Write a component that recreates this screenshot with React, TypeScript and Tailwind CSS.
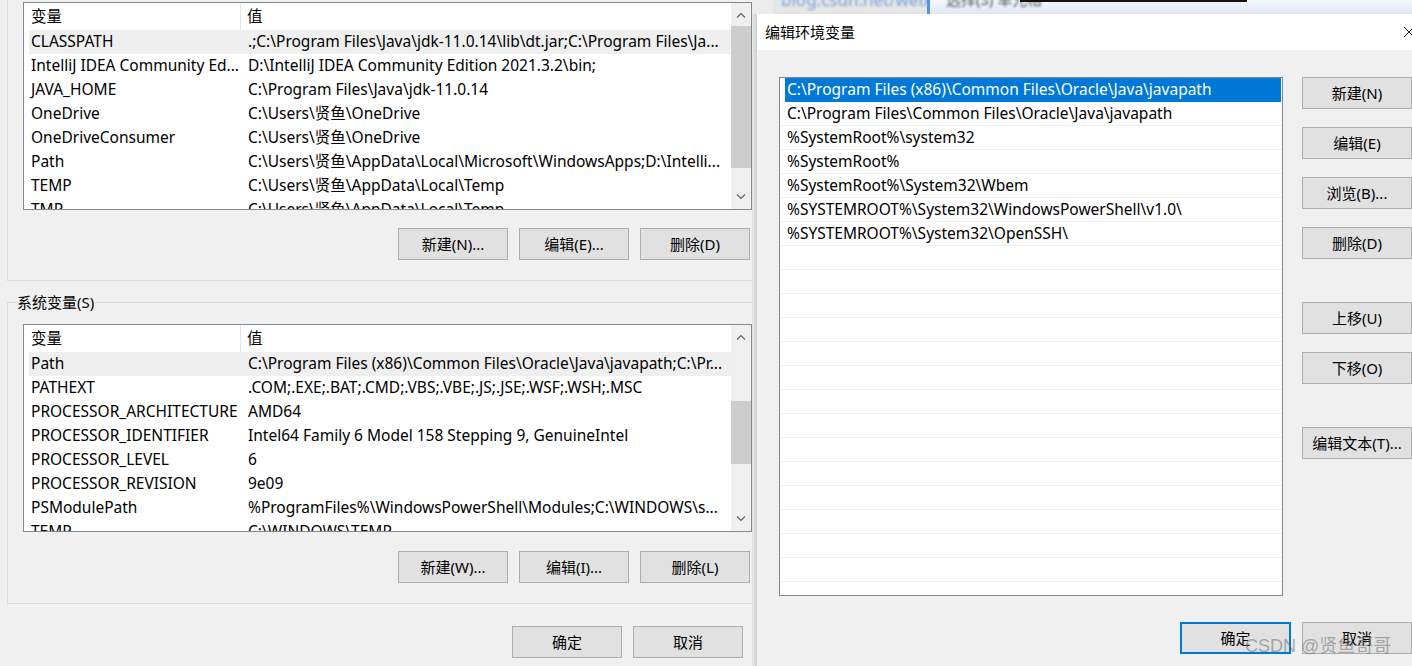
import React from 'react'

const font = { fontFamily: '"Noto Sans", "Noto Sans CJK SC", sans-serif' }

interface Row {
  name: string
  value: string
}

const userVars: Row[] = [
  { name: 'CLASSPATH', value: '.;C:\\Program Files\\Java\\jdk-11.0.14\\lib\\dt.jar;C:\\Program Files\\Ja...' },
  { name: 'IntelliJ IDEA Community Ed...', value: 'D:\\IntelliJ IDEA Community Edition 2021.3.2\\bin;' },
  { name: 'JAVA_HOME', value: 'C:\\Program Files\\Java\\jdk-11.0.14' },
  { name: 'OneDrive', value: 'C:\\Users\\贤鱼\\OneDrive' },
  { name: 'OneDriveConsumer', value: 'C:\\Users\\贤鱼\\OneDrive' },
  { name: 'Path', value: 'C:\\Users\\贤鱼\\AppData\\Local\\Microsoft\\WindowsApps;D:\\Intelli...' },
  { name: 'TEMP', value: 'C:\\Users\\贤鱼\\AppData\\Local\\Temp' },
  { name: 'TMP', value: 'C:\\Users\\贤鱼\\AppData\\Local\\Temp' }
]

const systemVars: Row[] = [
  { name: 'Path', value: 'C:\\Program Files (x86)\\Common Files\\Oracle\\Java\\javapath;C:\\Pr...' },
  { name: 'PATHEXT', value: '.COM;.EXE;.BAT;.CMD;.VBS;.VBE;.JS;.JSE;.WSF;.WSH;.MSC' },
  { name: 'PROCESSOR_ARCHITECTURE', value: 'AMD64' },
  { name: 'PROCESSOR_IDENTIFIER', value: 'Intel64 Family 6 Model 158 Stepping 9, GenuineIntel' },
  { name: 'PROCESSOR_LEVEL', value: '6' },
  { name: 'PROCESSOR_REVISION', value: '9e09' },
  { name: 'PSModulePath', value: '%ProgramFiles%\\WindowsPowerShell\\Modules;C:\\WINDOWS\\s...' },
  { name: 'TEMP', value: 'C:\\WINDOWS\\TEMP' }
]

const pathEntries = [
  'C:\\Program Files (x86)\\Common Files\\Oracle\\Java\\javapath',
  'C:\\Program Files\\Common Files\\Oracle\\Java\\javapath',
  '%SystemRoot%\\system32',
  '%SystemRoot%',
  '%SystemRoot%\\System32\\Wbem',
  '%SYSTEMROOT%\\System32\\WindowsPowerShell\\v1.0\\',
  '%SYSTEMROOT%\\System32\\OpenSSH\\'
]

function Chevron({ up }: { up?: boolean }) {
  return (
    <svg width="10" height="6" viewBox="0 0 10 6" fill="none">
      <path d={up ? 'M1 5.5 L5 1.5 L9 5.5' : 'M1 0.5 L5 4.5 L9 0.5'} stroke="#606060" strokeWidth="1.2" />
    </svg>
  )
}

function Scrollbar({ thumbTop, thumbHeight }: { thumbTop: number; thumbHeight: number }) {
  return (
    <div className="relative w-[20px] h-full bg-[#f0f0f0] flex flex-col items-center justify-between py-[9px]">
      <Chevron up />
      <div className="absolute left-0 w-[20px] bg-[#cdcdcd]" style={{ top: thumbTop, height: thumbHeight }} />
      <Chevron />
    </div>
  )
}

function VarTable({ rows, thumbTop, thumbHeight }: { rows: Row[]; thumbTop: number; thumbHeight: number }) {
  return (
    <div className="w-[729px] h-[208px] border border-[#828790] bg-white flex">
      <div className="flex-1 pl-[5px] overflow-hidden">
        <div className="h-[27px] flex items-center text-[15.5px]">
          <div className="w-[212px] pl-[2px] h-full flex items-center border-r border-[#e5e5e5]">变量</div>
          <div className="pl-[6px]">值</div>
        </div>
        {rows.map((r, i) => (
          <div
            key={r.name + i}
            className={'h-[24px] flex items-center text-[15.5px] whitespace-nowrap ' + (i === 0 ? 'bg-[#efefef]' : '')}
          >
            <div className="w-[212px] pl-[2px] overflow-hidden">{r.name}</div>
            <div className="pl-[7px]">{r.value}</div>
          </div>
        ))}
      </div>
      <Scrollbar thumbTop={thumbTop} thumbHeight={thumbHeight} />
    </div>
  )
}

function Btn({ label, w = 'w-[110px]', primary }: { label: string; w?: string; primary?: boolean }) {
  return (
    <div
      className={
        w +
        ' h-[32px] shrink-0 bg-[#e1e1e1] flex items-center justify-center text-[15px] text-black ' +
        (primary ? 'border-2 border-[#0078d7]' : 'border border-[#adadad]')
      }
    >
      {label}
    </div>
  )
}

function LeftWindow() {
  return (
    <div className="w-[752px] shrink-0 h-[666px] bg-[#f0f0f0] flex flex-col">
      {/* user variables group */}
      <div className="ml-[7px] border-l border-b border-[#dcdcdc] pl-[15px] pt-[2px] pb-[20px]">
        <VarTable rows={userVars} thumbTop={23} thumbHeight={142} />
        <div className="flex justify-end gap-[11px] mt-[18px] pr-[2px]">
          <Btn label="新建(N)..." />
          <Btn label="编辑(E)..." />
          <Btn label="删除(D)" />
        </div>
      </div>
      {/* system variables group */}
      <div className="relative ml-[7px] mt-[21px] border-l border-t border-b border-[#dcdcdc] pl-[15px] pt-[21px] pb-[20px]">
        <div className="absolute left-[8px] -top-[11px] bg-[#f0f0f0] px-[1px] text-[15px] leading-[20px]">系统变量(S)</div>
        <VarTable rows={systemVars} thumbTop={76} thumbHeight={63} />
        <div className="flex justify-end gap-[11px] mt-[19px] pr-[2px]">
          <Btn label="新建(W)..." />
          <Btn label="编辑(I)..." />
          <Btn label="删除(L)" />
        </div>
      </div>
      <div className="flex justify-end gap-[11px] mt-[22px] pr-[9px]">
        <Btn label="确定" />
        <Btn label="取消" />
      </div>
    </div>
  )
}

function BackgroundStrip() {
  return (
    <div className="h-[14px] flex overflow-hidden">
      <div className="w-[21px] bg-[#ececec]" />
      <div className="w-[154px] bg-[#e6e6e6] overflow-hidden relative">
        <div className="absolute left-[8px] -top-[13px] text-[17px] text-[#7aa3dc] blur-[0.8px] whitespace-nowrap">
          blog.csdn.net/weixin_
        </div>
      </div>
      <div className="w-[3px] bg-[#4f95e0]" />
      <div className="flex-1 bg-gradient-to-b from-[#f4f8fc] to-[#dfe8f2] relative">
        <div className="absolute left-[16px] -top-[12px] text-[15px] text-[#555] blur-[0.8px] whitespace-nowrap">选择(S) 单元格</div>
        <div className="absolute left-[90px] top-0 w-[227px] h-[2px] bg-[#111]" />
      </div>
    </div>
  )
}

function Dialog() {
  const rows = Array.from({ length: 22 }, (_, i) => pathEntries[i] ?? '')
  return (
    <div className="flex-1 flex flex-col bg-[#f0f0f0] relative">
      <div className="h-[36px] bg-white flex items-center justify-between pl-[8px]">
        <span className="text-[15px]">编辑环境变量</span>
        <svg width="12" height="12" viewBox="0 0 12 12" className="mr-[-3px]">
          <path d="M1 1 L11 11 M11 1 L1 11" stroke="#222" strokeWidth="1" />
        </svg>
      </div>
      <div className="flex pl-[22px] pt-[27px]">
        <div className="w-[504px] h-[519px] border border-[#828790] bg-white overflow-hidden">
          {rows.map((t, i) => (
            <div
              key={i}
              className={
                'h-[24px] text-[15.5px] whitespace-nowrap flex items-center ' +
                (i === 0 ? 'bg-[#0078d7] text-white ml-[5px] mr-[1px] pl-[2px]' : 'border-b border-[#f0f0f0] pl-[7px]')
              }
            >
              {t}
            </div>
          ))}
        </div>
        <div className="ml-[19px] flex flex-col">
          <Btn label="新建(N)" />
          <div className="mt-[18px]"><Btn label="编辑(E)" /></div>
          <div className="mt-[18px]"><Btn label="浏览(B)..." /></div>
          <div className="mt-[18px]"><Btn label="删除(D)" /></div>
          <div className="mt-[43px]"><Btn label="上移(U)" /></div>
          <div className="mt-[18px]"><Btn label="下移(O)" /></div>
          <div className="mt-[43px]"><Btn label="编辑文本(T)..." /></div>
        </div>
      </div>
      <div className="flex pl-[423px] pt-[26px] gap-[11px]">
        <Btn label="确定" w="w-[111px]" primary />
        <Btn label="取消" />
      </div>
      <div
        className="absolute left-[488px] top-[619px] text-[18px] whitespace-nowrap text-[rgba(110,110,110,0.55)]"
        style={{ fontFamily: '"Liberation Sans", "Noto Sans CJK SC", sans-serif' }}
      >
        CSDN @贤鱼哥哥
      </div>
    </div>
  )
}

export default function App() {
  return (
    <div className="w-[1412px] h-[666px] overflow-hidden flex text-black" style={font}>
      <LeftWindow />
      <div className="flex-1 flex flex-col">
        <BackgroundStrip />
        <div className="flex-1 flex">
          <div className="w-[5px] bg-gradient-to-r from-[#e8e8e8] to-[#cfcfcf]" />
          <Dialog />
        </div>
      </div>
    </div>
  )
}
